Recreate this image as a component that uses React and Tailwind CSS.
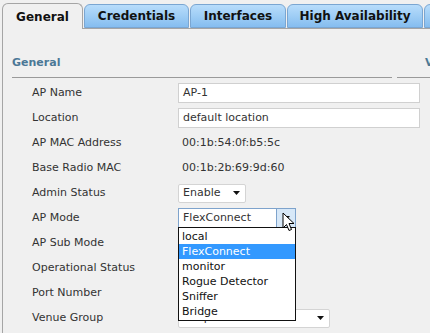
import { useState } from 'react'

const TABS = [
  { name: 'General', w: 81 },
  { name: 'Credentials', w: 105 },
  { name: 'Interfaces', w: 96 },
  { name: 'High Availability', w: 136 },
]
const MODES = ['local', 'FlexConnect', 'monitor', 'Rogue Detector', 'Sniffer', 'Bridge']

function Arrow() {
  return (
    <svg width="7" height="4" viewBox="0 0 7 4" className="shrink-0">
      <path d="M0 0 H7 L3.5 4 Z" fill="#111" />
    </svg>
  )
}

function Select({ value, width, open }) {
  if (open) {
    return (
      <div className="flex h-[20px] border border-[#7ea3cc] bg-white" style={{ width }}>
        <span className="flex-1 pl-[4px] leading-[18px]">{value}</span>
        <span className="flex w-[19px] items-center justify-center border-l border-[#7ea3cc] bg-[#d7e8f8]">
          <Arrow />
        </span>
      </div>
    )
  }
  return (
    <div
      className="flex h-[19px] items-center justify-between rounded-[2px] border border-[#d4d4d4] bg-white pl-[4px] pr-[5px]"
      style={{ width }}
    >
      <span>{value}</span>
      <Arrow />
    </div>
  )
}

function Row({ label, children }) {
  return (
    <div className="flex h-[25px] items-center">
      <div className="w-[146px] shrink-0">{label}</div>
      <div className="relative">{children}</div>
    </div>
  )
}

export default function App() {
  const [tab] = useState(0)

  return (
    <div
      className="relative h-[333px] w-[430px] overflow-hidden bg-[#f0f0f0] text-[11px] text-[#333]"
      style={{ fontFamily: '"DejaVu Sans", Verdana, sans-serif' }}
    >
      {/* tabs */}
      <div className="flex h-[28px] items-end whitespace-nowrap pl-[2px]">
        {TABS.map((t, i) =>
          i === tab ? (
            <div
              key={t.name}
              className="relative z-10 -mb-px flex h-[26px] shrink-0 items-center justify-center rounded-t-[6px] border border-b-0 border-[#a5a5a5] bg-[#f0f0f0] text-[12px] font-bold text-[#111]"
              style={{ width: t.w }}
            >
              {t.name}
            </div>
          ) : (
            <div
              key={t.name}
              className="ml-px flex h-[24px] shrink-0 items-center justify-center rounded-t-[6px] border border-[#7aa6d2] bg-linear-to-b from-[#b8ddfb] to-[#85bdef] text-[12px] font-bold text-[#111]"
              style={{ width: t.w }}
            >
              {t.name}
            </div>
          )
        )}
        <div className="ml-px h-[24px] w-[20px] shrink-0 rounded-t-[6px] border border-[#7aa6d2] bg-linear-to-b from-[#b8ddfb] to-[#85bdef]" />
      </div>

      {/* panel */}
      <div className="ml-[2px] h-full border-l border-t border-[#a5a5a5] pl-[9px]">
        <div className="flex gap-[5px] pt-[26px]">
          <div className="w-[380px] shrink-0">
            <div className="border-b border-[#9a9a9a] pb-[5px] font-bold text-[#4b7896]">General</div>
            <div className="pl-[20px] pt-[3px]">
              <Row label="AP Name">
                <div className="h-[20px] w-[242px] border border-[#d0d0d0] bg-white pl-[4px] leading-[18px]">AP-1</div>
              </Row>
              <Row label="Location">
                <div className="h-[20px] w-[242px] border border-[#d0d0d0] bg-white pl-[4px] leading-[18px]">default location</div>
              </Row>
              <Row label="AP MAC Address">
                <span className="pl-[4px]">00:1b:54:0f:b5:5c</span>
              </Row>
              <Row label="Base Radio MAC">
                <span className="pl-[4px]">00:1b:2b:69:9d:60</span>
              </Row>
              <Row label="Admin Status">
                <Select value="Enable" width={68} />
              </Row>
              <Row label="AP Mode">
                <Select value="FlexConnect" width={118} open />
                <div className="absolute left-0 top-[19px] z-20 w-[118px] border border-[#111] bg-white py-[1px] text-[#111]">
                  {MODES.map((m) => (
                    <div
                      key={m}
                      className={
                        m === 'FlexConnect'
                          ? 'h-[15px] bg-[#3399ff] pl-[3px] leading-[15px] text-white'
                          : 'h-[15px] pl-[3px] leading-[15px]'
                      }
                    >
                      {m}
                    </div>
                  ))}
                </div>
                <svg className="absolute left-[104px] top-[4px] z-30" width="14" height="21" viewBox="0 0 14 21">
                  <path
                    d="M1 1 L1 16 L4.5 12.5 L7 18.5 L9.5 17.5 L7 11.5 L12 11.5 Z"
                    fill="#fff"
                    stroke="#000"
                    strokeWidth="1"
                  />
                </svg>
              </Row>
              <Row label="AP Sub Mode">
                <span />
              </Row>
              <Row label="Operational Status">
                <span />
              </Row>
              <Row label="Port Number">
                <span />
              </Row>
              <Row label="Venue Group">
                <Select value="Unspecified" width={152} />
              </Row>
            </div>
          </div>
          <div className="w-[200px] shrink-0">
            <div className="border-b border-[#9a9a9a] pb-[5px] pl-[28px] font-bold text-[#4b7896]">Versions</div>
          </div>
        </div>
      </div>
    </div>
  )
}
